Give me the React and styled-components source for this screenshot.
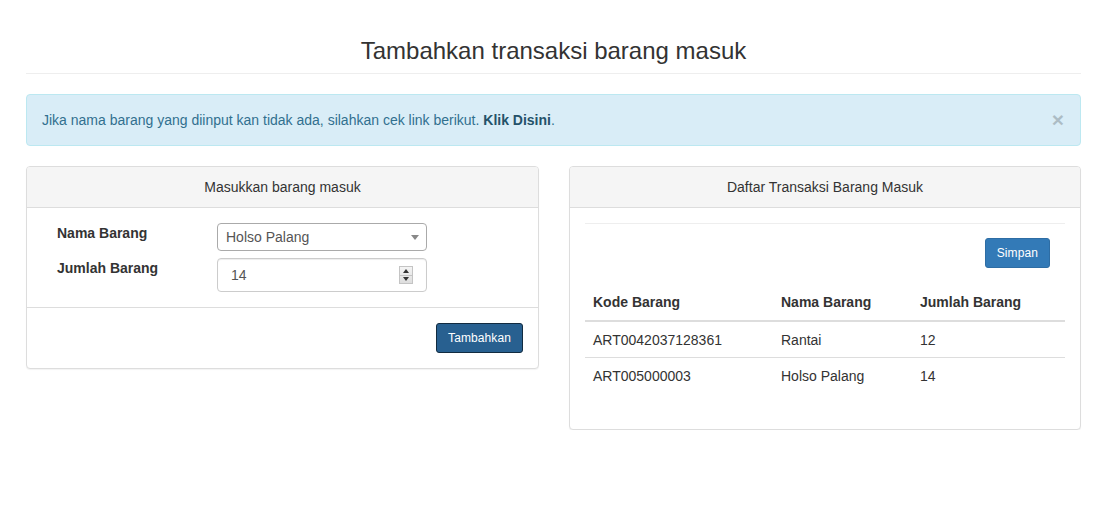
import React from "react";
import styled, { createGlobalStyle } from "styled-components";

const GlobalStyle = createGlobalStyle`
  * { box-sizing: border-box; }
  body {
    margin: 0;
    background: #fff;
    font-family: "Liberation Sans", Arial, sans-serif;
    font-size: 14px;
    line-height: 20px;
    color: #333;
  }
`;

const rows = [
  { kode: "ART0042037128361", nama: "Rantai", jumlah: 12 },
  { kode: "ART005000003", nama: "Holso Palang", jumlah: 14 },
];

const App = () => {
  return (
    <>
      <GlobalStyle />
      <Page>
        <PageHeader>Tambahkan transaksi barang masuk</PageHeader>

        <Alert>
          <span>
            Jika nama barang yang diinput kan tidak ada, silahkan cek link
            berikut. <AlertLink>Klik Disini</AlertLink>.
          </span>
          <Close>×</Close>
        </Alert>

        <Columns>
          <Panel>
            <PanelHeading>Masukkan barang masuk</PanelHeading>
            <PanelBody>
              <FormRow>
                <Label>Nama Barang</Label>
                <SelectWrap>
                  <Select defaultValue="Holso Palang">
                    <option>Rantai</option>
                    <option>Holso Palang</option>
                  </Select>
                </SelectWrap>
              </FormRow>
              <FormRow>
                <Label>Jumlah Barang</Label>
                <InputWrap>
                  <Input type="text" defaultValue="14" />
                  <Spinner>
                    <SpinHalf>
                      <Arrow up />
                    </SpinHalf>
                    <SpinHalf>
                      <Arrow />
                    </SpinHalf>
                  </Spinner>
                </InputWrap>
              </FormRow>
            </PanelBody>
            <PanelFooter>
              <Button dark>Tambahkan</Button>
            </PanelFooter>
          </Panel>

          <Panel>
            <PanelHeading>Daftar Transaksi Barang Masuk</PanelHeading>
            <PanelBody>
              <Rule />
              <Toolbar>
                <Button>Simpan</Button>
              </Toolbar>
              <Table>
                <thead>
                  <tr>
                    <Th style={{ width: 188 }}>Kode Barang</Th>
                    <Th style={{ width: 139 }}>Nama Barang</Th>
                    <Th>Jumlah Barang</Th>
                  </tr>
                </thead>
                <tbody>
                  {rows.map((r) => (
                    <tr key={r.kode}>
                      <Td>{r.kode}</Td>
                      <Td>{r.nama}</Td>
                      <Td>{r.jumlah}</Td>
                    </tr>
                  ))}
                </tbody>
              </Table>
            </PanelBody>
          </Panel>
        </Columns>
      </Page>
    </>
  );
};

export default App;

const Page = styled.div`
  width: 1055px;
  margin-left: 26px;
  padding-top: 38px;
`;

const PageHeader = styled.h3`
  margin: 0 0 20px;
  padding-bottom: 9px;
  border-bottom: 1px solid #eee;
  font-size: 24px;
  font-weight: 500;
  line-height: 26px;
  text-align: center;
  color: #333;
`;

const Alert = styled.div`
  display: flex;
  justify-content: space-between;
  align-items: center;
  padding: 15px 15px;
  margin-bottom: 20px;
  background-color: #d9edf7;
  border: 1px solid #bce8f1;
  border-radius: 4px;
  color: #31708f;
  height: 52px;
`;

const AlertLink = styled.b`
  color: #245269;
  font-weight: 700;
`;

const Close = styled.span`
  font-size: 21px;
  font-weight: 700;
  line-height: 1;
  color: #000;
  opacity: 0.2;
  margin-right: 1px;
  margin-top: -2px;
`;

const Columns = styled.div`
  display: grid;
  grid-template-columns: 513px 512px;
  gap: 30px;
  align-items: start;
`;

const Panel = styled.div`
  background: #fff;
  border: 1px solid #ddd;
  border-radius: 4px;
  box-shadow: 0 1px 1px rgba(0, 0, 0, 0.05);
`;

const PanelHeading = styled.div`
  padding: 10px 15px;
  background-color: #f5f5f5;
  border-bottom: 1px solid #ddd;
  border-radius: 3px 3px 0 0;
  text-align: center;
  color: #333;
`;

const PanelBody = styled.div`
  padding: 15px;
`;

const PanelFooter = styled.div`
  display: flex;
  justify-content: flex-end;
  padding: 15px;
  border-top: 1px solid #ddd;
`;

const FormRow = styled.div`
  display: flex;
  align-items: flex-start;
  padding-left: 15px;
  & + & {
    margin-top: 7px;
  }
`;

const Label = styled.label`
  width: 160px;
  font-weight: 700;
  line-height: 20px;
  color: #333;
`;

const SelectWrap = styled.div`
  position: relative;
  width: 210px;
  &::after {
    content: "";
    position: absolute;
    right: 8px;
    top: 12px;
    border-left: 4px solid transparent;
    border-right: 4px solid transparent;
    border-top: 5px solid #888;
    pointer-events: none;
  }
`;

const Select = styled.select`
  appearance: none;
  width: 100%;
  height: 28px;
  padding: 0 8px;
  font-family: "Liberation Sans", Arial, sans-serif;
  font-size: 14px;
  color: #555;
  background: #fff;
  border: 1px solid #aaa;
  border-radius: 4px;
  outline: none;
`;

const InputWrap = styled.div`
  position: relative;
  width: 210px;
`;

const Input = styled.input`
  width: 100%;
  height: 34px;
  padding: 6px 13px;
  font-family: "Liberation Sans", Arial, sans-serif;
  font-size: 14px;
  color: #555;
  background: #fff;
  border: 1px solid #ccc;
  border-radius: 4px;
  box-shadow: inset 0 1px 1px rgba(0, 0, 0, 0.075);
  outline: none;
`;

const Spinner = styled.div`
  position: absolute;
  right: 14px;
  top: 8px;
  width: 14px;
  height: 18px;
  display: flex;
  flex-direction: column;
  border: 1px solid #c4c4c4;
  background: linear-gradient(#f4f4f4, #dedede);
`;

const SpinHalf = styled.div`
  flex: 1;
  display: flex;
  align-items: center;
  justify-content: center;
  & + & {
    border-top: 1px solid #c4c4c4;
  }
`;

const Arrow = styled.span`
  width: 0;
  height: 0;
  border-left: 3px solid transparent;
  border-right: 3px solid transparent;
  ${(p) =>
    p.up ? "border-bottom: 4px solid #333;" : "border-top: 4px solid #333;"}
`;

const Button = styled.button`
  padding: 5px 11px;
  font-family: "Liberation Sans", Arial, sans-serif;
  font-size: 12px;
  line-height: 18px;
  letter-spacing: 0.1px;
  color: #fff;
  background-color: ${(p) => (p.dark ? "#286090" : "#337ab7")};
  border: 1px solid ${(p) => (p.dark ? "#122b40" : "#2e6da4")};
  border-radius: 3px;
  cursor: pointer;
`;

const Rule = styled.hr`
  margin: 0 0 14px;
  border: 0;
  border-top: 1px solid #eee;
`;

const Toolbar = styled.div`
  display: flex;
  justify-content: flex-end;
  padding-right: 15px;
  margin-bottom: 16px;
`;

const Table = styled.table`
  width: 100%;
  border-collapse: collapse;
  margin-bottom: 21px;
`;

const Th = styled.th`
  padding: 8px;
  text-align: left;
  font-weight: 700;
  border-bottom: 2px solid #ddd;
`;

const Td = styled.td`
  padding: 8px 8px 7px;
  border-top: 1px solid #ddd;
`;
